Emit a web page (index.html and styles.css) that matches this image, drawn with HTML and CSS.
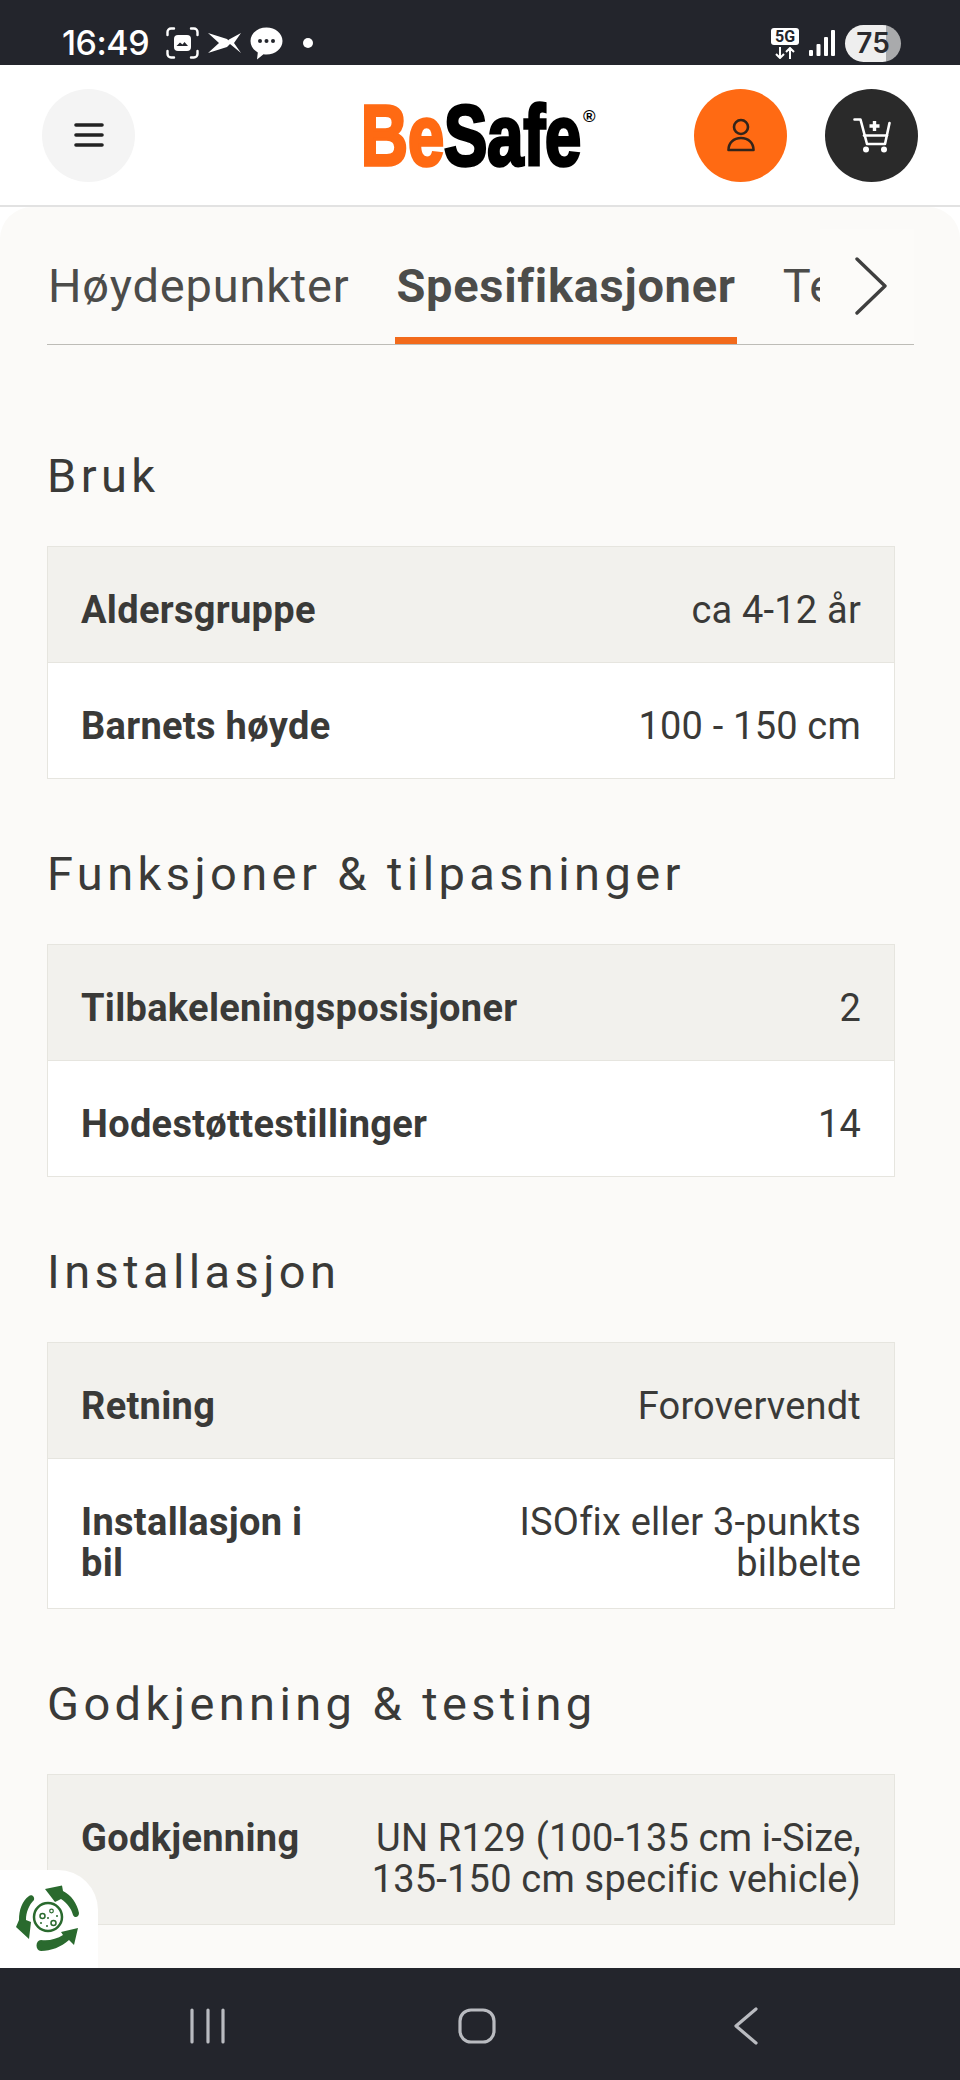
FILE: index.html
```html
<!DOCTYPE html>
<html lang="no">
<head>
  <meta charset="UTF-8" />
  <title>BeSafe - Spesifikasjoner</title>
  <link rel="stylesheet" href="styles.css">
</head>
<body>
  <div class="phone">
    <div class="statusbar">
      <span class="clock">16:49</span>
      <svg class="st-shot" width="33" height="32" viewBox="0 0 33 32" fill="none" stroke="#fff" stroke-width="2.400" stroke-linecap="round">
        <path d="M1.500 8V5a3.500 3.500 0 0 1 3.500-3.500h3M25 1.500h3A3.500 3.500 0 0 1 31.500 5v3M31.500 24v3a3.500 3.500 0 0 1-3.500 3.500h-3M8 30.500H5A3.500 3.500 0 0 1 1.500 27v-3"/>
        <rect x="8" y="8" width="17" height="16" rx="4" fill="#fff" stroke="none"/>
        <path d="M10.500 19l3.500-3.500 2.500 2 2-2.500 3.500 4z" fill="#23252c" stroke="none"/>
      </svg>
      <svg class="st-cut" width="33" height="20" viewBox="0 0 33 20" fill="#fff">
        <path d="M0 0l19 6 4 4-4 4L0 20l11-10z"/>
        <path d="M33 0L21 6.500 19 9l3 2 11 9-7-10z"/>
      </svg>
      <svg class="st-chat" width="33" height="33" viewBox="0 0 33 33" fill="#fff">
        <path d="M16.500 0.500C25.500 0.500 32.500 6.500 32.500 14S25.500 27.500 16.500 27.500c-1 0-2-.100-3-.300L7 32.500l.800-7C3.300 23 .500 18.800 .500 14 .500 6.500 7.500 .500 16.500 .500z"/>
        <circle cx="10" cy="14" r="2" fill="#23252c"/>
        <circle cx="16.500" cy="14" r="2" fill="#23252c"/>
        <circle cx="23" cy="14" r="2" fill="#23252c"/>
      </svg>
      <span class="st-dot"></span>
      <span class="st-spacer"></span>
      <div class="st-net">
        <span class="net-badge">5G</span>
        <svg width="20" height="12" viewBox="0 0 20 12" fill="none" stroke="#fff" stroke-width="2">
          <path d="M5 0v11M1 7l4 4 4-4M15 12V1M11 5l4-4 4 4"/>
        </svg>
      </div>
      <svg class="st-signal" width="26" height="26" viewBox="0 0 26 26" fill="#fff">
        <rect x="0" y="20" width="4" height="6" rx="1"/>
        <rect x="7.500" y="14" width="4" height="12" rx="1"/>
        <rect x="15" y="7" width="4" height="19" rx="1"/>
        <rect x="22" y="0" width="4" height="26" rx="1"/>
      </svg>
      <span class="battery">75</span>
    </div>

    <header class="topbar">
      <button class="round round-menu" aria-label="Meny">
        <svg width="30" height="24" viewBox="0 0 30 24" stroke="#222" stroke-width="3.600" stroke-linecap="round">
          <path d="M2 2h26M2 12h26M2 22h26"/>
        </svg>
      </button>
      <div class="logo"><span class="logo-word"><span class="logo-be">Be</span>Safe</span><span class="logo-reg">®</span></div>
      <div class="top-actions">
        <button class="round round-user" aria-label="Konto">
          <svg width="30" height="34" viewBox="0 0 30 34" fill="none" stroke="#33241a" stroke-width="2.600" stroke-linejoin="round">
            <circle cx="15" cy="9" r="7"/>
            <path d="M2.500 32c0-7 5-12 12.500-12s12.500 5 12.500 12z"/>
          </svg>
        </button>
        <button class="round round-cart" aria-label="Handlekurv">
          <svg width="38" height="35" viewBox="0 0 38 35" fill="none" stroke="#fff" stroke-width="2.600" stroke-linecap="round" stroke-linejoin="round">
            <path d="M1.500 1.500h6L14 26h18l4.500-21"/>
            <path d="M11 17.500h23"/>
            <path d="M21.500 3v10M16.500 8h10" stroke-width="3.400" stroke-linecap="butt"/>
            <circle cx="13" cy="31.500" r="3" fill="#fff" stroke="none"/>
            <circle cx="31" cy="31.500" r="3" fill="#fff" stroke="none"/>
          </svg>
        </button>
      </div>
    </header>

    <main class="panel">
      <nav class="tabs">
        <a class="tab">Høydepunkter</a>
        <a class="tab tab-active">Spesifikasjoner</a>
        <span class="tab-clip"><a class="tab">Tekniske</a></span>
        <span class="tab-next">
          <svg width="32" height="58" viewBox="0 0 32 58" fill="none" stroke="#3f3f3f" stroke-width="3.400" stroke-linecap="round" stroke-linejoin="round">
            <path d="M2 2l28 27L2 56"/>
          </svg>
        </span>
      </nav>

      <section class="spec spec-first">
        <h2>Bruk</h2>
        <div class="rows">
          <div class="row"><b>Aldersgruppe</b><span>ca 4-12 år</span></div>
          <div class="row"><b>Barnets høyde</b><span>100 - 150 cm</span></div>
        </div>
      </section>

      <section class="spec">
        <h2>Funksjoner &amp; tilpasninger</h2>
        <div class="rows">
          <div class="row"><b>Tilbakeleningsposisjoner</b><span>2</span></div>
          <div class="row"><b>Hodestøttestillinger</b><span>14</span></div>
        </div>
      </section>

      <section class="spec">
        <h2>Installasjon</h2>
        <div class="rows">
          <div class="row"><b>Retning</b><span>Forovervendt</span></div>
          <div class="row"><b>Installasjon i<br>bil</b><span>ISOfix eller 3-punkts<br>bilbelte</span></div>
        </div>
      </section>

      <section class="spec">
        <h2>Godkjenning &amp; testing</h2>
        <div class="rows">
          <div class="row"><b>Godkjenning</b><span>UN R129 (100-135 cm i-Size,<br>135-150 cm specific vehicle)</span></div>
        </div>
      </section>
    </main>

    <div class="eco-badge">
      <svg width="66" height="68" viewBox="0 0 66 68" fill="#2a6a2e">
        <path d="M29 4L46 .5l1 5.500C55 10 61 18 63 28c0 5-5 5-6 2-2-7-6-12-12-16l-6 3z"/>
        <path d="M13 11C6 16 3 25 3 35l-3 7 13 12 2-17-5-2c0-8 3-15 8-20 1-4-3-6-5-4z"/>
        <path d="M25 55c8 1 16-1 22-5l-2-3 17-4-4 17-5-5c-8 7-18 11-28 11-6 0-6-11 0-11z"/>
        <circle cx="32" cy="32" r="14" fill="none" stroke="#2a6a2e" stroke-width="2.500"/>
        <circle cx="26.500" cy="31" r="2.500" fill="none" stroke="#2a6a2e" stroke-width="1.500"/>
        <circle cx="35.500" cy="26" r="1.800" fill="none" stroke="#2a6a2e" stroke-width="1.200"/>
        <circle cx="37.500" cy="38" r="2.500" fill="none" stroke="#2a6a2e" stroke-width="1.500"/>
        <circle cx="32" cy="33" r="1"/><circle cx="31" cy="41" r="1"/><circle cx="41" cy="31" r="1"/><circle cx="25" cy="38" r="1"/>
      </svg>
    </div>

    <div class="navbar">
      <svg class="nav-recent" width="36" height="36" viewBox="0 0 36 36" stroke="#b9bbc0" stroke-width="3.200" stroke-linecap="round">
        <path d="M2 2v32M18 2v32M33 2v32"/>
      </svg>
      <svg class="nav-home" width="38" height="36" viewBox="0 0 38 36" fill="none" stroke="#b9bbc0" stroke-width="3.200">
        <rect x="2" y="2" width="34" height="32" rx="11"/>
      </svg>
      <svg class="nav-back" width="24" height="38" viewBox="0 0 24 38" fill="none" stroke="#b9bbc0" stroke-width="3.200" stroke-linecap="round" stroke-linejoin="round">
        <path d="M22 2L2 19l20 17"/>
      </svg>
    </div>
  </div>
</body>
</html>
```

FILE: styles.css
```css
html, body { margin: 0; padding: 0; }
body {
  width: 960px;
  height: 2080px;
  overflow: hidden;
  font-family: Roboto, "Liberation Sans", sans-serif;
  color: #3a3a38;
  background: #fff;
}

.phone {
  position: relative;
  display: flex;
  flex-direction: column;
  width: 960px;
  height: 2080px;
  overflow: hidden;
}

/* status bar */
.statusbar {
  display: flex;
  align-items: center;
  flex: 0 0 65px;
  box-sizing: border-box;
  padding: 21px 59px 0 62px;
  background: #23252c;
}
.clock { width: 104px; font-family: Inter, sans-serif; font-size: 34px; font-weight: 500; line-height: 44px; color: #fff; letter-spacing: -.5px; }
.st-shot { flex: none; }
.st-cut { flex: none; margin-left: 9px; }
.st-chat { flex: none; margin-left: 9px; }
.st-dot { width: 10px; height: 10px; margin-left: 20px; border-radius: 50%; background: #fff; }
.st-spacer { flex: 1; }
.st-net { display: flex; flex-direction: column; align-items: center; gap: 2px; width: 28px; }
.net-badge {
  width: 28px;
  height: 17px;
  border-radius: 3px;
  background: #fff;
  color: #23252c;
  font-family: Roboto, sans-serif;
  font-size: 16px;
  font-weight: 700;
  line-height: 17px;
  text-align: center;
}
.st-signal { flex: none; margin-left: 10px; }
.battery {
  width: 56px;
  height: 37px;
  margin-left: 10px;
  border-radius: 19px;
  background: linear-gradient(90deg, #eee 0, #eee 74%, #a9aaac 74%);
  color: #2a2a2e;
  font-family: Inter, sans-serif;
  font-size: 28px;
  font-weight: 600;
  line-height: 37px;
  text-align: center;
}

/* header */
.topbar {
  display: flex;
  align-items: center;
  flex: 0 0 142px;
  box-sizing: border-box;
  padding: 0 42px;
  border-bottom: 2px solid #e2e2e2;
  background: #fff;
}
.round {
  display: flex;
  align-items: center;
  justify-content: center;
  width: 93px;
  height: 93px;
  padding: 0;
  border: none;
  border-radius: 50%;
}
.round-menu { background: #f4f4f4; }
.round-user { background: #ff6a13; }
.round-cart { background: #2a2a2a; }
.top-actions { display: flex; gap: 38px; margin-left: auto; }
.logo {
  display: flex;
  align-items: flex-start;
  width: 234px;
  height: 66px;
  margin-left: 226px;
  color: #000;
  font-family: "Liberation Sans", Arial, sans-serif;
}
.logo-word {
  display: block;
  flex: none;
  width: 222px;
  font-size: 86px;
  font-weight: 700;
  line-height: 66px;
  white-space: nowrap;
  transform: scaleX(.755);
  transform-origin: left center;
  -webkit-text-stroke: 3.500px currentColor;
}
.logo-be { color: #ff6a13; }
.logo-reg { flex: none; margin-top: 6px; font-size: 17px; font-weight: 700; line-height: 17px; }

/* panel */
.panel {
  flex: 1;
  box-sizing: border-box;
  min-height: 0;
  overflow: hidden;
  padding: 0 47px;
  border-radius: 32px 32px 0 0;
  background: #fbfaf8;
}

.tabs {
  position: relative;
  display: flex;
  align-items: flex-end;
  width: 867px;
  height: 138px;
  box-sizing: border-box;
  border-bottom: 1px solid #bdbcb7;
  gap: 45px;
}
.tab {
  display: block;
  flex: none;
  box-sizing: border-box;
  height: 88px;
  padding: 0 1px;
  color: #4c4c4a;
  font-size: 47px;
  line-height: 60px;
  letter-spacing: .8px;
  white-space: nowrap;
  border-bottom: 7px solid transparent;
}
.tab-active { font-weight: 700; border-bottom-color: #f26a1b; letter-spacing: .7px; }
.tab-clip { display: block; flex: none; width: 38px; overflow: hidden; }
.tab-next {
  position: absolute;
  top: 22px;
  right: 0;
  bottom: 0;
  display: flex;
  justify-content: center;
  box-sizing: border-box;
  width: 94px;
  padding: 28px 0 0 8px;
  background: #fcfbf9;
}

.spec { width: 848px; padding-top: 65px; }
.spec-first { padding-top: 101px; }
.spec h2 {
  margin: 0;
  color: #3a3a38;
  font-size: 47px;
  font-weight: 400;
  line-height: 60px;
  letter-spacing: 4.400px;
}
.rows { margin-top: 40px; border: 1px solid #e6e5df; }
.row {
  display: flex;
  align-items: flex-start;
  justify-content: space-between;
  box-sizing: border-box;
  min-height: 115px;
  padding: 43px 33px 24px;
  background: #fff;
  font-size: 38px;
  line-height: 41px;
  letter-spacing: .2px;
}
.row + .row { border-top: 1px solid #e6e5df; min-height: 116px; }
.row:nth-child(odd) { background: #f2f1ed; }
.row b { font-weight: 700; letter-spacing: .3px; white-space: nowrap; }
.row span { text-align: right; white-space: nowrap; }

/* floating badge */
.eco-badge {
  position: absolute;
  left: 0;
  top: 1870px;
  display: flex;
  align-items: center;
  justify-content: center;
  width: 98px;
  height: 98px;
  box-sizing: border-box;
  border-radius: 0 40px 0 0;
  background: #fff;
}

/* android nav */
.navbar {
  display: flex;
  align-items: center;
  flex: 0 0 112px;
  padding-top: 4px;
  box-sizing: border-box;
  background: #23252c;
}
.nav-recent { margin-left: 190px; }
.nav-home { margin-left: 232px; }
.nav-back { margin-left: 238px; }
```
